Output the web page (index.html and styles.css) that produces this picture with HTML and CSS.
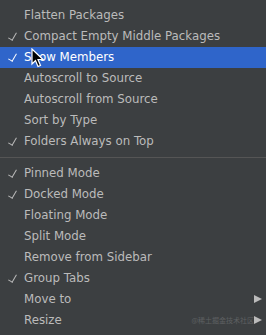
FILE: index.html
```html
<!DOCTYPE html>
<html lang="en">
<head>
    <meta charset="UTF-8">
    <title>Menu</title>
    <link rel="stylesheet" href="styles.css">
</head>
<body>
    <div class="menu">
        <div class="item">Flatten Packages</div>
        <div class="item checked">Compact Empty Middle Packages</div>
        <div class="item checked active">Show Members
            <svg class="cursor" width="14" height="20" viewBox="0 0 14 20">
                <path d="M1 1 L1 16 L4.5 12.5 L7 18.5 L9.5 17.5 L7 11.5 L12 11.5 Z" fill="#000" stroke="#fff" stroke-width="1.2"/>
            </svg>
        </div>
        <div class="item">Autoscroll to Source</div>
        <div class="item">Autoscroll from Source</div>
        <div class="item">Sort by Type</div>
        <div class="item checked">Folders Always on Top</div>
        <div class="sep"></div>
        <div class="item checked">Pinned Mode</div>
        <div class="item checked">Docked Mode</div>
        <div class="item">Floating Mode</div>
        <div class="item">Split Mode</div>
        <div class="item">Remove from Sidebar</div>
        <div class="item checked">Group Tabs</div>
        <div class="item sub">Move to</div>
        <div class="item sub">Resize<span class="mark">@稀土掘金技术社区</span></div>
    </div>
</body>
</html>
```

FILE: styles.css
```css
html, body {
    margin: 0;
    background: #3c3f41;
}

.menu {
    width: 266px;
    height: 335px;
    padding-top: 5px;
    box-sizing: border-box;
    font-family: "DejaVu Sans", sans-serif;
    font-size: 11.8px;
    color: #bbbbbb;
}

.item {
    position: relative;
    height: 21px;
    line-height: 21px;
    padding-left: 24px;
    white-space: nowrap;
}

.item.checked::before {
    content: "";
    position: absolute;
    left: 10px;
    top: 5px;
    width: 3.5px;
    height: 8px;
    border: solid #bbbbbb;
    border-width: 0 1.5px 1.5px 0;
    transform: rotate(30deg);
}

.item.active {
    background: #2f65ca;
    color: #ffffff;
}

.item.active::before {
    border-color: #ffffff;
}

.item.sub::after {
    content: "";
    position: absolute;
    right: 4px;
    top: 6px;
    border-style: solid;
    border-width: 4.5px 0 4.5px 8px;
    border-color: transparent transparent transparent #bbbbbb;
}

.sep {
    height: 11px;
    display: flex;
    align-items: center;
}

.sep::after {
    content: "";
    flex: 1;
    height: 1px;
    background: #555555;
}

.cursor {
    position: absolute;
    left: 31px;
    top: 1px;
}

.mark {
    position: absolute;
    right: 12px;
    top: 0;
    font-family: "Noto Sans CJK SC", sans-serif;
    font-size: 7px;
    color: #5e6062;
}
```
